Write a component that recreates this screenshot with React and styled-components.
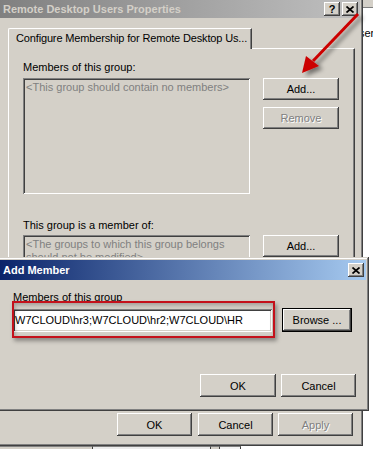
import React from 'react';
import styled, { createGlobalStyle } from 'styled-components';

const face = '#d4d0c8';
const font = '"Liberation Sans", Arial, sans-serif';

const GlobalStyle = createGlobalStyle`
  html, body {
    margin: 0;
    padding: 0;
    background: #fff;
  }
  body {
    font-family: ${font};
    font-size: 11px;
  }
  * {
    box-sizing: border-box;
  }
`;

const Desktop = styled.div`
  position: relative;
  width: 373px;
  height: 449px;
  overflow: hidden;
  background: #fff;
  font-family: ${font};
  font-size: 11px;
  color: #000;
`;

// window sitting behind, only its right edge shows
const BackPane = styled.div`
  position: absolute;
  left: 330px;
  top: 0;
  right: 0;
  bottom: 0;
  background: #fff;
  display: flex;
  flex-direction: column;
`;

const BackHeader = styled.div`
  height: 8px;
  background: ${face};
  border-bottom: 1px solid #808080;
`;

const BackText = styled.div`
  padding: 19px 0 0 21px;
  line-height: 13px;
`;

const BottomStrip = styled.div`
  position: absolute;
  left: 0;
  top: 446px;
  width: 373px;
  height: 3px;
  display: flex;
`;

const StripCell = styled.div`
  width: ${(p) => p.$w}px;
  background: ${(p) => p.$bg};
  border-right: 1px solid #404040;
  border-top: 1px solid #808080;
`;

const Window = styled.div`
  position: absolute;
  left: ${(p) => p.$x}px;
  top: ${(p) => p.$y}px;
  width: ${(p) => p.$w}px;
  height: ${(p) => p.$h}px;
  z-index: ${(p) => p.$z || 1};
  padding: 3px;
  background: ${face};
  display: flex;
  flex-direction: column;
  box-shadow: inset -1px -1px #404040, inset 1px 1px ${face},
    inset -2px -2px #808080, inset 2px 2px #fff;
`;

const TitleBar = styled.div`
  flex: none;
  height: ${(p) => p.$h}px;
  display: flex;
  align-items: center;
  padding: 0 2px 0 4px;
  background: ${(p) =>
    p.$active
      ? 'linear-gradient(90deg, #0a246a, #a6caf0)'
      : 'linear-gradient(90deg, #808080, #c0c0c0)'};
  color: ${(p) => (p.$active ? '#fff' : face)};
  font-weight: bold;
  font-size: 11px;
`;

const Caption = styled.span`
  flex: 1;
  white-space: nowrap;
`;

const CaptionButton = styled.button`
  width: 16px;
  height: 14px;
  margin-left: ${(p) => p.$gap || 0}px;
  padding: 0;
  border: none;
  background: ${face};
  color: #000;
  font: bold 11px ${font};
  line-height: 14px;
  display: flex;
  align-items: center;
  justify-content: center;
  box-shadow: inset -1px -1px #404040, inset 1px 1px #fff,
    inset -2px -2px #808080;
`;

const Body = styled.div`
  flex: 1;
  display: flex;
  flex-direction: column;
  padding: 10px 5px 7px 9px;
`;

const TabStrip = styled.div`
  display: flex;
  position: relative;
  z-index: 1;
  margin-bottom: -1px;
`;

const Tab = styled.div`
  width: 244px;
  height: 21px;
  padding: 3px 0 0 7px;
  background: ${face};
  border-left: 1px solid #fff;
  border-top: 1px solid #fff;
  border-right: 1px solid #404040;
  border-top-left-radius: 2px;
  box-shadow: inset -1px 0 #808080;
  line-height: 13px;
  letter-spacing: -0.15px;
  white-space: nowrap;
`;

const Panel = styled.div`
  flex: 1;
  background: ${face};
  border-left: 1px solid #fff;
  border-top: 1px solid #fff;
  border-right: 1px solid #404040;
  border-bottom: 1px solid #404040;
  box-shadow: inset -1px -1px #808080;
  padding: 12px 0 0 14px;
`;

const Section = styled.div`
  display: grid;
  grid-template-columns: 227px 76px;
  column-gap: 13px;
  margin-top: ${(p) => p.$mt || 0}px;
`;

const Label = styled.div`
  grid-column: 1 / -1;
  line-height: 13px;
  margin-bottom: ${(p) => p.$mb ?? 4}px;
`;

const ListBox = styled.div`
  height: ${(p) => p.$h}px;
  padding: 3px 3px;
  background: ${face};
  color: #808080;
  line-height: 13px;
  white-space: nowrap;
  overflow: hidden;
  box-shadow: inset 1px 1px #808080, inset -1px -1px #fff,
    inset 2px 2px #404040, inset -2px -2px ${face};
`;

const ButtonStack = styled.div`
  display: flex;
  flex-direction: column;
  gap: 7px;
`;

const Button = styled.button`
  flex: none;
  width: ${(p) => p.$w || 75}px;
  height: ${(p) => p.$h || 23}px;
  padding: 0;
  border: none;
  background: ${face};
  font: 11px ${font};
  color: ${(p) => (p.$disabled ? '#808080' : '#000')};
  text-shadow: ${(p) => (p.$disabled ? '1px 1px #fff' : 'none')};
  box-shadow: ${(p) =>
    p.$default
      ? `inset 0 0 0 1px #000, inset -2px -2px #404040, inset 2px 2px #fff, inset -3px -3px #808080`
      : `inset -1px -1px #404040, inset 1px 1px #fff, inset -2px -2px #808080`};
`;

const Footer = styled.div`
  display: flex;
  justify-content: flex-end;
  gap: 5px;
  margin-top: 7px;
  padding-right: 2px;
`;

const DialogBody = styled.div`
  flex: 1;
  display: flex;
  flex-direction: column;
  padding: 11px 10px 11px 14px;
`;

const FieldRow = styled.div`
  display: flex;
  align-items: center;
  gap: 10px;
`;

const Highlight = styled.div`
  position: relative;

  &::after {
    content: '';
    position: absolute;
    left: -1px;
    right: -3px;
    top: -8px;
    bottom: -6px;
    border: 2px solid #c4111b;
    box-shadow: 2px 3px 4px rgba(0, 0, 0, 0.35),
      inset 1px 2px 4px rgba(0, 0, 0, 0.25);
    pointer-events: none;
  }
`;

const TextField = styled.div`
  width: 259px;
  height: 23px;
  padding: 0 2px;
  background: #fff;
  line-height: 23px;
  white-space: nowrap;
  box-shadow: inset 1px 1px #808080, inset -1px -1px #fff,
    inset 2px 2px #404040, inset -2px -2px ${face};
`;

const DialogFooter = styled.div`
  margin-top: auto;
  display: flex;
  justify-content: flex-end;
  gap: 5px;
`;

const ArrowLayer = styled.svg`
  position: absolute;
  left: 290px;
  top: 8px;
  z-index: 3;
  pointer-events: none;
  overflow: visible;
`;

const CloseGlyph = () => (
  <svg width="8" height="7" viewBox="0 0 8 7">
    <path d="M0.5 0.5 L7.5 6.5 M7.5 0.5 L0.5 6.5" stroke="#000" strokeWidth="1.7" />
  </svg>
);

const Arrow = () => (
  <ArrowLayer width="80" height="80" viewBox="0 0 80 80">
    <defs>
      <filter id="arrowShadow" x="-40%" y="-40%" width="180%" height="180%">
        <feDropShadow dx="4" dy="3" stdDeviation="2" floodColor="#000" floodOpacity="0.45" />
      </filter>
    </defs>
    <g filter="url(#arrowShadow)">
      <line x1="68" y1="6" x2="23" y2="53" stroke="#cc0000" strokeWidth="3" />
      <polygon points="12,65 16,48 29,58" fill="#cc0000" />
    </g>
  </ArrowLayer>
);

export default function App() {
  return (
    <Desktop>
      <GlobalStyle />
      <BackPane>
        <BackHeader />
        <BackText>Users</BackText>
      </BackPane>
      <BottomStrip>
        <StripCell $w={93} $bg={face} />
        <StripCell $w={118} $bg="#ececec" />
        <StripCell $w={9} $bg={face} />
        <StripCell $w={21} $bg="#f4f4f4" />
      </BottomStrip>

      <Window $x={-4} $y={-3} $w={367} $h={449}>
        <TitleBar $h={18}>
          <Caption>Remote Desktop Users Properties</Caption>
          <CaptionButton>?</CaptionButton>
          <CaptionButton $gap={2}>
            <CloseGlyph />
          </CaptionButton>
        </TitleBar>
        <Body>
          <TabStrip>
            <Tab>Configure Membership for Remote Desktop Us...</Tab>
          </TabStrip>
          <Panel>
            <Section>
              <Label>Members of this group:</Label>
              <ListBox $h={116}>&lt;This group should contain no members&gt;</ListBox>
              <ButtonStack>
                <Button $w={76} $h={22}>Add...</Button>
                <Button $w={76} $h={22} $disabled>Remove</Button>
              </ButtonStack>
            </Section>
            <Section $mt={25}>
              <Label $mb={3}>This group is a member of:</Label>
              <ListBox $h={60}>
                &lt;The groups to which this group belongs
                <br />
                should not be modified&gt;
              </ListBox>
              <ButtonStack>
                <Button $w={76} $h={22}>Add...</Button>
              </ButtonStack>
            </Section>
          </Panel>
          <Footer>
            <Button>OK</Button>
            <Button style={{ marginLeft: 1 }}>Cancel</Button>
            <Button $disabled>Apply</Button>
          </Footer>
        </Body>
      </Window>

      <Window $x={-4} $y={257} $w={373} $h={154} $z={2}>
        <TitleBar $h={20} $active>
          <Caption>Add Member</Caption>
          <CaptionButton>
            <CloseGlyph />
          </CaptionButton>
        </TitleBar>
        <DialogBody>
          <Label>Members of this group</Label>
          <FieldRow>
            <Highlight>
              <TextField>{'W7CLOUD\\hr3;W7CLOUD\\hr2;W7CLOUD\\HR'}</TextField>
            </Highlight>
            <Button $w={70} $h={24} $default>
              Browse ...
            </Button>
          </FieldRow>
          <DialogFooter>
            <Button $w={76}>OK</Button>
            <Button>Cancel</Button>
          </DialogFooter>
        </DialogBody>
      </Window>

      <Arrow />
    </Desktop>
  );
}
